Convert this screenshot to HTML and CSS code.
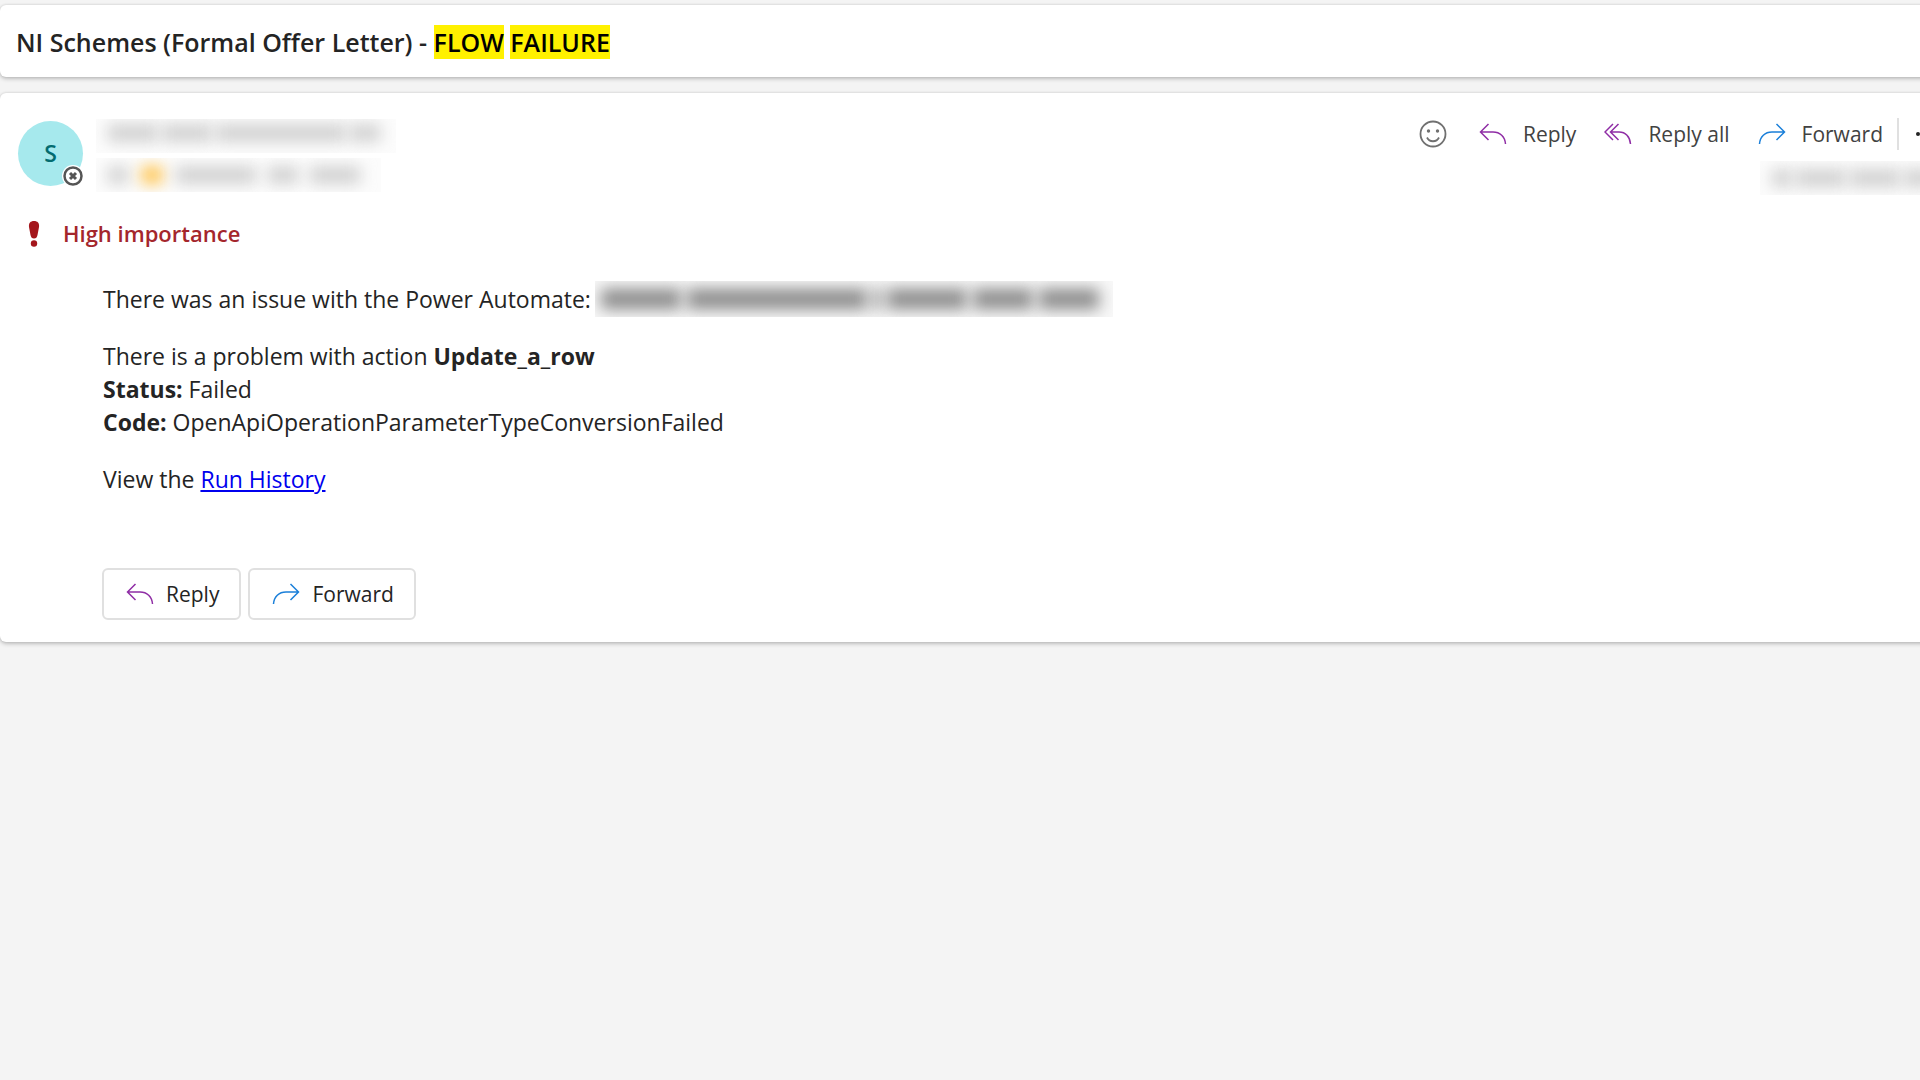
FILE: index.html
```
<!DOCTYPE html>
<html lang="en">
<head>
    <meta charset="UTF-8">
    <meta name="viewport" content="width=device-width, initial-scale=1.0">
    <title>NI Schemes (Formal Offer Letter) - FLOW FAILURE</title>
    <link rel="stylesheet" href="styles.css">
</head>
<body>
    <!-- Icons used more than once -->
    <svg class="icon-defs" width="0" height="0" aria-hidden="true">
        <symbol id="icon-reply" viewBox="0 0 28 22">
            <path d="M9.500 1L1.500 9l8 8M1.500 9H14c7 0 12 4.500 12.500 12" />
        </symbol>
        <symbol id="icon-reply-all" viewBox="0 0 28 22">
            <path d="M9 1L1 9l8 8M14.500 1L6.500 9l8 8M6.500 9H15c6.500 0 11 4.500 11.500 12" />
        </symbol>
        <symbol id="icon-forward" viewBox="0 0 28 22">
            <path d="M18.500 1l8 8-8 8M26.500 9H14C7 9 2 13.500 1.500 21" />
        </symbol>
    </svg>

    <header class="subject">
        <h1>NI Schemes (Formal Offer Letter) - <mark>FLOW</mark> <mark>FAILURE</mark></h1>
    </header>

    <main class="message">
        <div class="message-header">
            <div class="avatar">
                S
                <svg class="presence" viewBox="0 0 22 22" aria-hidden="true">
                    <circle cx="11" cy="11" r="11" fill="#fff" />
                    <circle cx="11" cy="11" r="8.500" fill="#fff" stroke="#555" stroke-width="2.500" />
                    <path d="M8 8l6 6M14 8l-6 6" stroke="#555" stroke-width="3" />
                </svg>
            </div>

            <div class="people" aria-hidden="true">
                <div class="redacted redacted-sender">
                    <i class="w50"></i><i class="w50"></i><i class="w130"></i><i class="w30"></i>
                </div>
                <div class="redacted redacted-recipient">
                    <i class="w20"></i><i class="w20 amber"></i><i class="w80"></i><i class="w30"></i><i class="w50"></i>
                </div>
            </div>

            <div class="message-side">
                <div class="toolbar">
                    <button class="tool react" aria-label="React">
                        <svg class="icon-smile" viewBox="0 0 28 28" aria-hidden="true">
                            <circle cx="14" cy="14" r="12.500" />
                            <path d="M8 17.500c2.500 5 9.500 5 12 0" />
                            <circle class="eye" cx="9.500" cy="11" r="1.700" />
                            <circle class="eye" cx="18.500" cy="11" r="1.700" />
                        </svg>
                    </button>
                    <button class="tool">
                        <svg class="icon purple" aria-hidden="true"><use href="#icon-reply" /></svg>
                        Reply
                    </button>
                    <button class="tool">
                        <svg class="icon purple" aria-hidden="true"><use href="#icon-reply-all" /></svg>
                        Reply all
                    </button>
                    <button class="tool">
                        <svg class="icon blue" aria-hidden="true"><use href="#icon-forward" /></svg>
                        Forward
                    </button>
                    <button class="tool more" aria-label="More actions">
                        <svg class="icon-more" viewBox="0 0 24 6" aria-hidden="true">
                            <circle cx="3" cy="3" r="2" />
                            <circle cx="12" cy="3" r="2" />
                            <circle cx="21" cy="3" r="2" />
                        </svg>
                    </button>
                </div>
                <div class="redacted redacted-date" aria-hidden="true">
                    <i class="w20"></i><i class="w50"></i><i class="w50"></i><i class="w30"></i>
                </div>
            </div>
        </div>

        <div class="importance">
            <svg class="icon-importance" viewBox="0 0 12 26" aria-hidden="true">
                <path d="M6 0c3.500 0 5.500 2 5 6L9.500 14c-.5 2.500-1.500 3.500-3.500 3.500S3 16.500 2.500 14L1 6c-.5-4 1.500-6 5-6z" />
                <circle cx="6" cy="22.500" r="3.200" />
            </svg>
            High importance
        </div>

        <div class="message-body">
            <p class="flow-line">
                There was an issue with the Power Automate:
                <span class="redacted redacted-flow" aria-hidden="true">
                    <i class="w80"></i><i class="w180"></i><i class="w8"></i><i class="w80"></i><i class="w60"></i><i class="w60"></i>
                </span>
            </p>
            <p>
                There is a problem with action <b>Update_a_row</b><br>
                <b>Status:</b> Failed<br>
                <b>Code:</b> OpenApiOperationParameterTypeConversionFailed
            </p>
            <p>View the <a href="#">Run History</a></p>
        </div>

        <div class="message-actions">
            <button class="action">
                <svg class="icon purple" aria-hidden="true"><use href="#icon-reply" /></svg>
                Reply
            </button>
            <button class="action">
                <svg class="icon blue" aria-hidden="true"><use href="#icon-forward" /></svg>
                Forward
            </button>
        </div>
    </main>
</body>
</html>
```
FILE: styles.css
```
* {
    box-sizing: border-box;
}

body {
    font-family: "Open Sans", "Noto Sans", sans-serif;
    font-size: 23px;
    line-height: 33px;
    color: #242424;
    margin: 0;
    padding: 5px 0 16px;
    background-color: #f4f4f4;
    overflow-x: hidden;
}

.icon-defs {
    position: absolute;
}

.subject,
.message {
    background-color: #fff;
    border-radius: 6px;
    /* The cards run on past the right edge of the pane */
    margin-right: -24px;
    box-shadow: 0 0 3px rgba(0, 0, 0, 0.14), 0 2px 4px rgba(0, 0, 0, 0.2);
}

.subject {
    padding: 20px 16px 18px;
    margin-bottom: 16px;
}

h1 {
    font-size: 25px;
    font-weight: 600;
    line-height: 34px;
    margin: 0;
}

mark {
    background-color: #fff100;
    color: #000;
}

.message {
    padding: 22px 0 22px 18px;
}

.message-header {
    display: flex;
    align-items: flex-start;
}

.avatar {
    position: relative;
    width: 65px;
    height: 65px;
    margin-top: 6px;
    border-radius: 50%;
    background-color: #a6e9ed;
    color: #036c70;
    font-weight: 600;
    line-height: 65px;
    text-align: center;
}

.presence {
    position: absolute;
    right: -1px;
    bottom: -1px;
    width: 22px;
    height: 22px;
}

.people {
    display: flex;
    flex-direction: column;
    gap: 5px;
    margin: 4px 0 0 13px;
}

/* Blurred out details */
.redacted {
    display: flex;
    align-items: center;
    gap: 4px;
    height: 34px;
    padding: 0 12px;
    overflow: hidden;
    background-color: #fcfcfc;
}

.redacted i {
    flex: none;
    height: 16px;
    background-color: #ccc;
    filter: blur(8px);
}

.redacted .amber {
    background-color: #fb3;
    margin: 0 2px;
}

.redacted-sender {
    width: 300px;
    align-items: flex-start;
    padding-top: 6px;
}

.redacted-recipient {
    width: 285px;
    gap: 12px;
}

.redacted-date {
    width: 184px;
    margin-left: auto;
}

.redacted-flow {
    width: 518px;
    height: 36px;
    gap: 6px;
    padding: 0 6px;
    background-color: #f8f8f8;
}

.redacted-flow i {
    height: 20px;
    background-color: #888;
}

.w8 { width: 8px; }
.w20 { width: 20px; }
.w30 { width: 30px; }
.w50 { width: 50px; }
.w60 { width: 60px; }
.w80 { width: 80px; }
.w130 { width: 130px; }
.w180 { width: 180px; }

.message-side {
    margin-left: auto;
}

.toolbar {
    display: flex;
    align-items: center;
    margin-bottom: 9px;
}

button {
    display: flex;
    align-items: center;
    font-family: inherit;
    font-size: 21px;
    line-height: 32px;
    background-color: transparent;
    cursor: pointer;
}

.tool {
    gap: 16px;
    height: 37px;
    padding: 0 14px;
    border: none;
    color: #424242;
}

.react {
    padding-right: 18px;
}

.more {
    height: 32px;
    padding: 0 5px 0 16px;
    border-left: 2px solid #e0e0e0;
}

.icon {
    width: 28px;
    height: 22px;
    fill: none;
    stroke-width: 1.5;
}

.purple {
    stroke: #8f2da5;
}

.blue {
    stroke: #1a7fd9;
}

.icon-smile {
    width: 28px;
    height: 28px;
    fill: none;
    stroke: #707070;
    stroke-width: 1.8;
}

.eye {
    fill: #707070;
    stroke: none;
}

.icon-more {
    width: 24px;
    height: 6px;
    fill: #242424;
}

.importance {
    display: flex;
    align-items: center;
    gap: 23px;
    margin-top: 22px;
    padding-left: 10px;
    font-size: 22px;
    font-weight: 600;
    color: #a4262c;
}

.icon-importance {
    width: 12px;
    height: 26px;
    fill: #a4161c;
}

.message-body {
    padding: 31px 85px 0;
}

.message-body p {
    margin: 0 0 24px;
}

.message-body .flow-line {
    display: flex;
    align-items: center;
    gap: 4px;
    margin-bottom: 23px;
}

.message-body a {
    color: #00e;
}

.message-actions {
    display: flex;
    gap: 7px;
    margin-top: 72px;
    padding-left: 84px;
}

.action {
    gap: 12px;
    height: 52px;
    padding: 0 20px 0 22px;
    border: 2px solid #e0e0e0;
    border-radius: 6px;
    color: #242424;
}
```
